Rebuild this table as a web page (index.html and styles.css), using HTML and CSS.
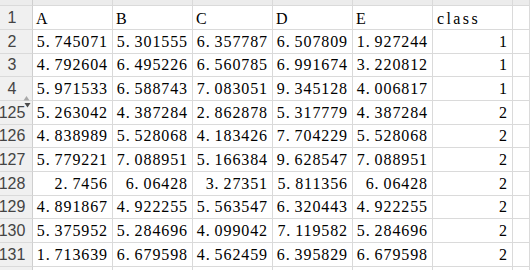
FILE: index.html
```html
<!DOCTYPE html>
<html>
<head>
<meta charset="utf-8">
<link rel="stylesheet" href="styles.css">
</head>
<body>
<div class="sheet">
  <div class="row top">
    <div class="c h"></div><div class="c"></div><div class="c"></div><div class="c"></div><div class="c"></div><div class="c"></div><div class="c"></div><div class="c"></div>
  </div>
  <div class="row r24">
    <div class="c h">1</div><div class="c t">A</div><div class="c t">B</div><div class="c t">C</div><div class="c t">D</div><div class="c t">E</div><div class="c t wide">class</div><div class="c"></div>
  </div>
  <div class="row r24">
    <div class="c h">2</div><div class="c n">5<i>.</i>745071</div><div class="c n">5<i>.</i>301555</div><div class="c n">6<i>.</i>357787</div><div class="c n">6<i>.</i>507809</div><div class="c n">1<i>.</i>927244</div><div class="c n">1</div><div class="c"></div>
  </div>
  <div class="row r23">
    <div class="c h">3</div><div class="c n">4<i>.</i>792604</div><div class="c n">6<i>.</i>495226</div><div class="c n">6<i>.</i>560785</div><div class="c n">6<i>.</i>991674</div><div class="c n">3<i>.</i>220812</div><div class="c n">1</div><div class="c"></div>
  </div>
  <div class="row r24">
    <div class="c h">4</div><div class="c n">5<i>.</i>971533</div><div class="c n">6<i>.</i>588743</div><div class="c n">7<i>.</i>083051</div><div class="c n">9<i>.</i>345128</div><div class="c n">4<i>.</i>006817</div><div class="c n">1</div><div class="c"></div>
  </div>
  <div class="row r24">
    <div class="c h">125</div><div class="c n">5<i>.</i>263042</div><div class="c n">4<i>.</i>387284</div><div class="c n">2<i>.</i>862878</div><div class="c n">5<i>.</i>317779</div><div class="c n">4<i>.</i>387284</div><div class="c n">2</div><div class="c"></div>
  </div>
  <div class="row r23">
    <div class="c h">126</div><div class="c n">4<i>.</i>838989</div><div class="c n">5<i>.</i>528068</div><div class="c n">4<i>.</i>183426</div><div class="c n">7<i>.</i>704229</div><div class="c n">5<i>.</i>528068</div><div class="c n">2</div><div class="c"></div>
  </div>
  <div class="row r24">
    <div class="c h">127</div><div class="c n">5<i>.</i>779221</div><div class="c n">7<i>.</i>088951</div><div class="c n">5<i>.</i>166384</div><div class="c n">9<i>.</i>628547</div><div class="c n">7<i>.</i>088951</div><div class="c n">2</div><div class="c"></div>
  </div>
  <div class="row r24">
    <div class="c h">128</div><div class="c n">2<i>.</i>7456</div><div class="c n">6<i>.</i>06428</div><div class="c n">3<i>.</i>27351</div><div class="c n">5<i>.</i>811356</div><div class="c n">6<i>.</i>06428</div><div class="c n">2</div><div class="c"></div>
  </div>
  <div class="row r23">
    <div class="c h">129</div><div class="c n">4<i>.</i>891867</div><div class="c n">4<i>.</i>922255</div><div class="c n">5<i>.</i>563547</div><div class="c n">6<i>.</i>320443</div><div class="c n">4<i>.</i>922255</div><div class="c n">2</div><div class="c"></div>
  </div>
  <div class="row r24">
    <div class="c h">130</div><div class="c n">5<i>.</i>375952</div><div class="c n">5<i>.</i>284696</div><div class="c n">4<i>.</i>099042</div><div class="c n">7<i>.</i>119582</div><div class="c n">5<i>.</i>284696</div><div class="c n">2</div><div class="c"></div>
  </div>
  <div class="row r24">
    <div class="c h">131</div><div class="c n">1<i>.</i>713639</div><div class="c n">6<i>.</i>679598</div><div class="c n">4<i>.</i>562459</div><div class="c n">6<i>.</i>395829</div><div class="c n">6<i>.</i>679598</div><div class="c n">2</div><div class="c"></div>
  </div>
  <div class="row r24">
    <div class="c h"></div><div class="c"></div><div class="c"></div><div class="c"></div><div class="c"></div><div class="c"></div><div class="c"></div><div class="c"></div>
  </div>
  <svg class="hidden-mark" width="9" height="14" viewBox="0 0 9 14">
    <path d="M0.5 5.5 L3.5 1 L6.5 5.5 Z" fill="#a8a8a8"/>
    <path d="M1.5 8 L7.5 8 L4.5 12.5 Z" fill="#4a4a4a"/>
  </svg>
</div>
</body>
</html>
```

FILE: styles.css
```css
html, body {
  margin: 0;
  padding: 0;
  background: #ffffff;
  overflow: hidden;
}
.sheet {
  position: relative;
  width: 530px;
  height: 270px;
  overflow: hidden;
}
.row {
  display: grid;
  grid-template-columns: 33px repeat(6, 80px) 1fr;
  height: 24px;
}
.row.top {
  height: 6px;
}
.row.top .c {
  background: #ececec;
}
.row.r23 {
  height: 23px;
}
.c {
  box-sizing: border-box;
  border-right: 1px solid #dadada;
  border-bottom: 1px solid #dadada;
  display: flex;
  align-items: flex-end;
  padding: 0 4px 3px 3px;
  font-family: "Liberation Serif", "Times New Roman", serif;
  font-size: 16px;
  line-height: 16px;
  color: #000;
  white-space: nowrap;
  min-width: 0;
}
.c.h {
  background: #f0f0f0;
  justify-content: center;
  padding: 0 8px 3px 0;
  font-family: "Liberation Sans", Arial, sans-serif;
  font-size: 16px;
  color: #444;
  border-right-color: #cfcfcf;
}
.c.t {
  justify-content: flex-start;
  letter-spacing: 1px;
  padding-bottom: 2px;
}
.c.t.wide {
  letter-spacing: 2.4px;
  padding-left: 4px;
}
.c.n {
  justify-content: flex-end;
  letter-spacing: 0.9px;
}
.c.n i {
  font-style: normal;
  display: inline-block;
  width: 8.9px;
  letter-spacing: 0;
}
.hidden-mark {
  position: absolute;
  left: 23px;
  top: 95px;
}
```
